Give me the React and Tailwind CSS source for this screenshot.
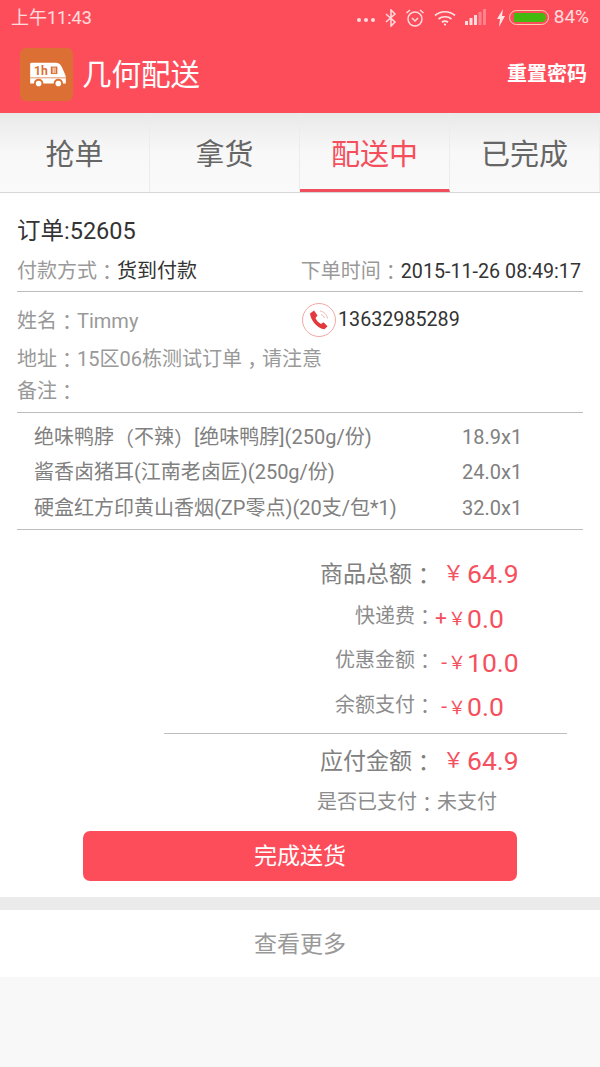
import React from 'react';

const Logo = () => (
  <div className="w-[53px] h-[53px] rounded-md bg-[#dc7034] flex items-center justify-center">
    <svg className="ml-[3px] mt-[2px]" width="40" height="30" viewBox="0 0 42 32">
      <path d="M3 3h26c3 0 5 1 7 5l3 7c1 2 1 3 1 5v5H2V5c0-1 0-2 1-2z" fill="#fff" />
      <rect x="24" y="7" width="7" height="8" fill="#dc7034" />
      <rect x="26" y="8" width="1" height="6" fill="#fff" />
      <rect x="28" y="8" width="1" height="6" fill="#fff" />
      <path d="M2 19h38" stroke="#dc7034" strokeWidth="0.8" />
      <circle cx="11" cy="25" r="5" fill="#dc7034" />
      <circle cx="11" cy="25" r="3" fill="#fff" />
      <circle cx="32" cy="25" r="5" fill="#dc7034" />
      <circle cx="32" cy="25" r="3" fill="#fff" />
      <text x="6" y="16" fontSize="13" fontWeight="700" fill="#dc7034" fontFamily="Roboto, sans-serif">1h</text>
    </svg>
  </div>
);

const StatusIcons = () => (
  <div className="flex items-center">
    <div className="flex gap-[3px] mt-[5px]">
      <span className="w-1 h-1 rounded-full bg-white/80" />
      <span className="w-1 h-1 rounded-full bg-white/80" />
      <span className="w-1 h-1 rounded-full bg-white/80" />
    </div>
    <svg className="ml-[10px]" width="12" height="18" viewBox="0 0 12 18" fill="none" stroke="#fff" strokeOpacity="0.8" strokeWidth="1.5">
      <path d="M1 5l9 8-4 4V1l4 4-9 8" />
    </svg>
    <svg className="ml-[8px]" width="20" height="20" viewBox="0 0 20 20" fill="none" stroke="#fff" strokeOpacity="0.8" strokeWidth="1.5">
      <circle cx="10" cy="11" r="7" />
      <path d="M7 10l3 3 3-3M1.500 5L5 2M18.500 5L15 2" />
    </svg>
    <svg className="ml-[9px]" width="22" height="16" viewBox="0 0 22 16" fill="none" stroke="#fff" strokeOpacity="0.85" strokeWidth="1.7">
      <path d="M1 5.500c5.500-5 14.500-5 20 0M4.500 9c3.500-3 9.500-3 13 0M8 12.300c1.700-1.300 4.300-1.300 6 0" />
      <circle cx="11" cy="14.500" r="1" fill="#fff" stroke="none" />
    </svg>
    <svg className="ml-[9px]" width="21" height="17" viewBox="0 0 21 17">
      <rect x="0" y="12" width="3" height="4" fill="#fff" fillOpacity="0.8" />
      <rect x="4.500" y="9" width="3" height="7" fill="#fff" fillOpacity="0.8" />
      <rect x="9" y="6" width="3" height="10" fill="#fff" fillOpacity="0.8" />
      <rect x="13.500" y="3" width="3" height="13" fill="#fff" fillOpacity="0.3" />
      <rect x="18" y="0" width="3" height="16" fill="#fff" fillOpacity="0.3" />
    </svg>
    <svg className="ml-[10px]" width="10" height="18" viewBox="0 0 10 18">
      <path d="M7 0L1 10h3l-1 8 6-11H6z" fill="#fff" fillOpacity="0.85" />
    </svg>
    <div className="ml-[3px] w-[40px] h-[15px] rounded-full border border-[#ffd0b0] p-[2px] flex justify-end">
      <div className="w-[32px] h-full rounded-r-full rounded-l-sm bg-[#43b80d]" />
    </div>
    <span className="ml-[5px] text-[19px] text-white/80">84%</span>
  </div>
);

// the reference centres full-width punctuation, the TC font does that too
const P = ({ children }) => <span className="font-['Noto_Sans_CJK_TC'] relative top-[2px]">{children}</span>;
const Comma = () => <span className="font-['Noto_Sans_CJK_TC'] relative top-[7px]">，</span>;

const tabs = ['抢单', '拿货', '配送中', '已完成'];

const Tabs = () => (
  <div className="h-[80px] flex bg-gradient-to-b from-[#e9e9e9] via-[#f8f8f8] to-[#fafafa] border-b border-[#d8d8d8]">
    {tabs.map((t, i) => (
      <div
        key={t}
        className={
          i === 2
            ? 'w-[150px] flex items-center justify-center text-[29px] text-[#f54f5c] border-b-[3px] border-[#f0505e] border-r border-r-[#ececec] pt-[10px]'
            : 'w-[150px] flex items-center justify-center text-[29px] text-[#666] border-r border-[#ececec] pt-[7px]'
        }
      >
        {t}
      </div>
    ))}
  </div>
);

const items = [
  [<>绝味鸭脖<P>（</P>不辣<P>）</P>[绝味鸭脖](250g/份)</>, '18.9x1'],
  ['酱香卤猪耳(江南老卤匠)(250g/份)', '24.0x1'],
  ['硬盒红方印黄山香烟(ZP零点)(20支/包*1)', '32.0x1'],
];

const Fee = ({ label, sign, value, h, big }) => (
  <div className={`flex items-center ${h}`}>
    <div className={big ? 'w-[435px] text-right text-[23px] text-[#808080]' : 'w-[435px] text-right text-[20px] text-[#8c8c8c] mb-[6px]'}>
      {label}<P>：</P>
    </div>
    <div className="w-[32px] flex justify-end items-center text-[#f5505e] whitespace-nowrap">
      {big ? (
        <span className="text-[21px] pr-[3px]">￥</span>
      ) : (
        <>
          <span className="text-[21px] pr-[1px]">{sign}</span>
          <span className="text-[18px] pr-[1px]">￥</span>
        </>
      )}
    </div>
    <div className="text-[#f5505e] text-[26.500px]">{value}</div>
  </div>
);

const App = () => {
  return (
    <div className="min-h-[1067px] bg-[#f8f8f8] font-['Roboto','Noto_Sans_CJK_SC',sans-serif]">
      <div className="h-[113px] bg-[#fe4d5a] text-white">
        <div className="h-[35px] flex items-center justify-between pl-[11px] pr-[11px]">
          <span className="text-[18px] text-white/80">上午11:43</span>
          <StatusIcons />
        </div>
        <div className="flex items-center h-[78px] pl-[20px] pr-[13px]">
          <Logo />
          <span className="ml-[9px] text-[29.500px] pt-[2px]">几何配送</span>
          <span className="ml-auto text-[20px] font-bold">重置密码</span>
        </div>
      </div>
      <Tabs />

      <div className="bg-white h-[704px] px-[17px]">
        <div className="h-[67px] pt-[22px] text-[23.500px] leading-[33px] text-[#333]">订单:52605</div>
        <div className="h-[21px] flex items-center justify-between pr-[2px] text-[20px] text-[#999] whitespace-nowrap">
          <span>付款方式<P>：</P><span className="text-[#333]">货到付款</span></span>
          <span>下单时间<P>：</P><span className="text-[#333] text-[19.700px]">2015-11-26 08:49:17</span></span>
        </div>
        <div className="mt-[10px] border-t border-[#bdbdbd]" />
        <div className="h-[56px] flex items-center text-[20px] text-[#999]">
          <span className="w-[284px]">姓名<P>：</P>Timmy</span>
          <svg width="36" height="36" viewBox="0 0 36 36" fill="none">
            <circle cx="18" cy="18" r="16.500" stroke="#f0a9a5" strokeWidth="1" />
            <path d="M9 11.500l4-3 3.500 5-2 2.500c1 2.500 3 4.500 5.500 6l2.500-1.800 4 4-3 3c-7-.5-14-9-14.500-15.700z" fill="#e4393c" />
            <path d="M19 9c3.500.5 7 3.500 7.500 7.500M20 12.500c1.800.5 3 2 3.500 3.500" stroke="#f2b5b0" strokeWidth="1" />
          </svg>
          <span className="ml-[1px] text-[#333] text-[19.700px]">13632985289</span>
        </div>
        <div className="text-[20px] leading-[20px] text-[#999] h-[20px] whitespace-nowrap">地址<P>：</P>15区06栋测试订单<Comma />请注意</div>
        <div className="text-[20px] text-[#999] h-[44px] flex items-center"><span>备注<P>：</P></span></div>
        <div className="border-t border-[#bdbdbd] pt-[6px] pb-[3px]">
          {items.map(([name, price]) => (
            <div key={price} className="h-[35.500px] flex items-center pl-[17px] text-[20px] text-[#808080] whitespace-nowrap">
              <span className="w-[428px]">{name}</span>
              <span>{price}</span>
            </div>
          ))}
        </div>
        <div className="border-t border-[#bdbdbd]" />

        <div className="-mx-[17px] pt-[22px]">
          <Fee big h="h-[45px]" label="商品总额" value="64.9" />
          <Fee h="h-[44px]" label="快递费" sign="+" value="0.0" />
          <Fee h="h-[44px]" label="优惠金额" sign="-" value="10.0" />
          <Fee h="h-[45px]" label="余额支付" sign="-" value="0.0" />
          <div className="ml-[164px] w-[403px] mt-[3px] border-t border-[#bdbdbd]" />
          <div className="mt-[5px]">
            <Fee big h="h-[44px]" label="应付金额" value="64.9" />
          </div>
          <div className="h-[38px] flex items-center pl-[317px] text-[20px] text-[#8c8c8c] whitespace-nowrap">是否已支付<P>：</P>未支付</div>
          <div className="mx-[83px] mt-[10px] h-[50px] pt-[3px] rounded-[7px] bg-[#fe4d5a] flex items-center justify-center text-white text-[23px]">完成送货</div>
        </div>
      </div>

      <div className="h-[80px] border-t-[13px] border-[#ebebeb] pt-[3px] bg-white flex items-center justify-center text-[23px] text-[#999]">查看更多</div>
    </div>
  );
};

export default App;
